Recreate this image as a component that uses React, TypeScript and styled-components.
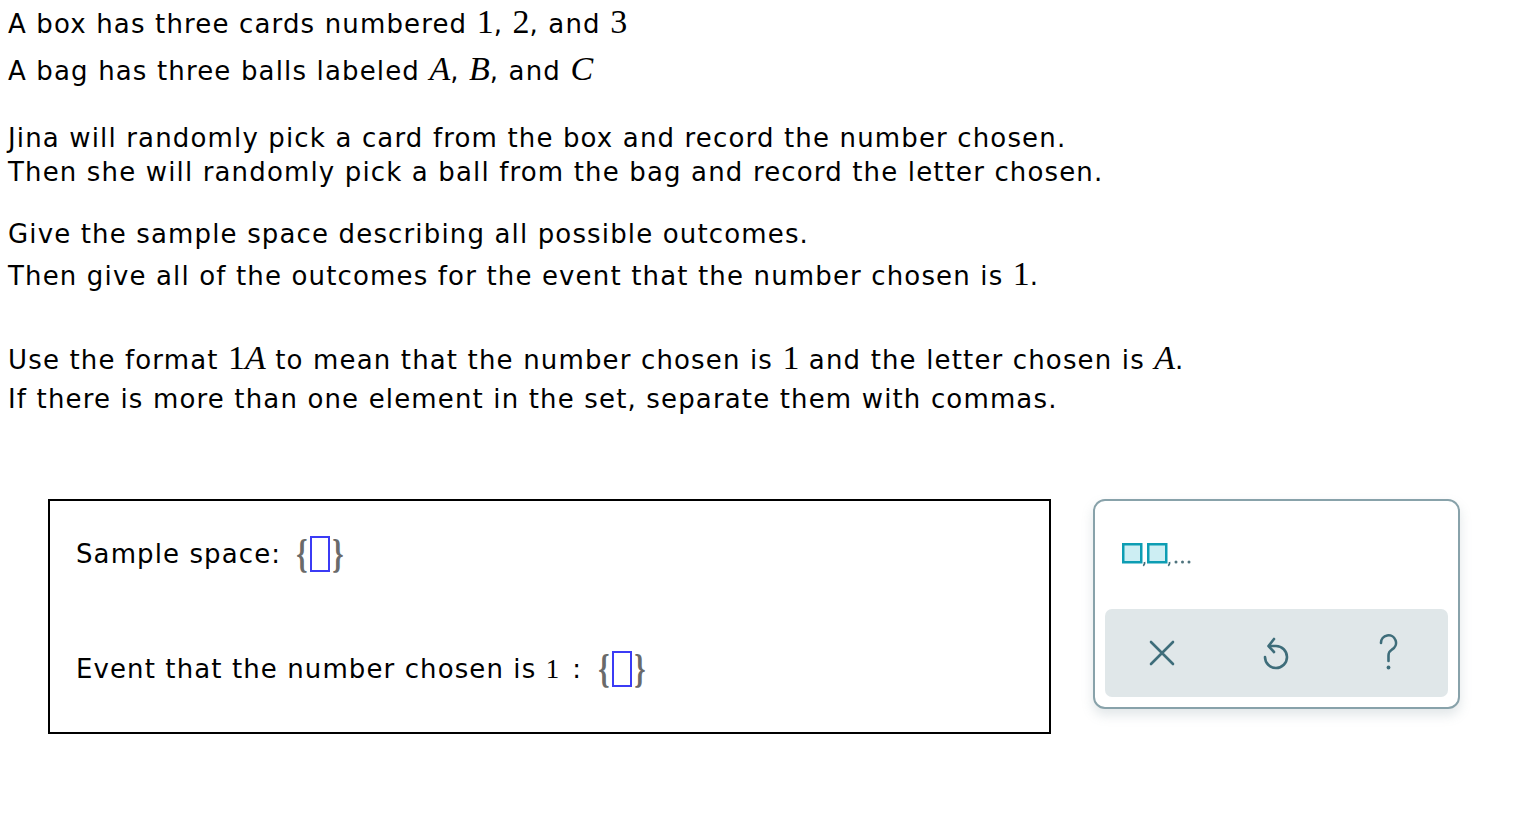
import styled, { createGlobalStyle } from "styled-components";

const GlobalStyle = createGlobalStyle`
  body {
    margin: 0;
    background: #ffffff;
    font-family: "DejaVu Sans", Verdana, sans-serif;
    color: #000000;
  }
`;

const Page = styled.div`
  padding: 0 8px;
  width: 1532px;
  box-sizing: border-box;
`;

const Para = styled.div<{ $top?: number }>`
  margin-top: ${(p) => p.$top ?? 0}px;
`;

const Line = styled.div<{ $h: number }>`
  height: ${(p) => p.$h}px;
  line-height: ${(p) => p.$h}px;
  font-size: 26px;
  letter-spacing: 1.15px;
  white-space: nowrap;
`;

const M = styled.span<{ $it?: boolean; $size?: number }>`
  font-family: "Liberation Serif", "Times New Roman", serif;
  font-size: ${(p) => p.$size ?? 34}px;
  font-style: ${(p) => (p.$it ? "italic" : "normal")};
  letter-spacing: 0;
`;

const Workspace = styled.div`
  display: flex;
  align-items: flex-start;
  gap: 42px;
  margin-top: 83px;
  margin-left: 40px;
`;

const AnswerBox = styled.div`
  width: 1003px;
  height: 235px;
  box-sizing: border-box;
  border: 2px solid #000000;
  padding: 27px 0 0 26px;
  display: flex;
  flex-direction: column;
  gap: 63px;
`;

const AnswerRow = styled.div`
  display: flex;
  align-items: center;
  height: 52px;
  font-size: 26px;
  letter-spacing: 1.1px;
  white-space: pre;
`;

const Colon = styled.span`
  margin: 0 10px 0 13px;
`;

const SetWrap = styled.span`
  display: inline-flex;
  align-items: center;
  gap: 2px;
  margin-left: 6px;
`;

const Brace = styled.span`
  font-family: "Liberation Serif", serif;
  font-size: 40px;
  font-weight: bold;
  color: #6a6a6a;
  line-height: 1;
  display: inline-block;
  transform: scaleX(0.72);
  margin: 0 -2px;
  letter-spacing: 0;
`;

const Slot = styled.span`
  display: inline-block;
  width: 20px;
  height: 36px;
  box-sizing: border-box;
  border: 2px solid #3b3bf5;
`;

const Panel = styled.div`
  width: 367px;
  height: 210px;
  box-sizing: border-box;
  border: 2px solid #88a2aa;
  border-radius: 12px;
  background: #ffffff;
  box-shadow: 0 6px 12px rgba(120, 140, 150, 0.22);
  padding: 42px 10px 10px 10px;
  display: flex;
  flex-direction: column;
  gap: 42px;
`;

const Palette = styled.div`
  display: flex;
  align-items: flex-end;
  padding-left: 17px;
  height: 24px;
`;

const ToolBar = styled.div`
  height: 88px;
  background: #e0e7e9;
  border-radius: 7px;
  display: grid;
  grid-template-columns: 1fr 1fr 1fr;
  align-items: center;
  justify-items: center;
`;

const ToolButton = styled.button`
  background: none;
  border: none;
  padding: 0;
  width: 40px;
  height: 40px;
  display: flex;
  align-items: center;
  justify-content: center;
  cursor: pointer;
`;

const ICON = "#3e6d7a";

function PaletteIcon() {
  return (
    <svg width="76" height="24" viewBox="0 0 76 24">
      <rect x="1.25" y="1.25" width="18" height="18" fill="#cdeef3" stroke="#0d9db3" strokeWidth="2.5" />
      <path d="M22.5 19 q0.6 2.2 -1.2 3.8" stroke="#3e6d7a" strokeWidth="1.8" fill="none" />
      <rect x="26.25" y="1.25" width="18" height="18" fill="#cdeef3" stroke="#0d9db3" strokeWidth="2.5" />
      <path d="M47.5 19 q0.6 2.2 -1.2 3.8" stroke="#3e6d7a" strokeWidth="1.8" fill="none" />
      <circle cx="54" cy="19" r="1.5" fill="#4f737d" />
      <circle cx="60.5" cy="19" r="1.5" fill="#4f737d" />
      <circle cx="67" cy="19" r="1.5" fill="#4f737d" />
    </svg>
  );
}

function ClearIcon() {
  return (
    <svg width="26" height="26" viewBox="0 0 26 26">
      <path d="M2 2 L24 24 M24 2 L2 24" stroke={ICON} strokeWidth="2.6" strokeLinecap="round" />
    </svg>
  );
}

function UndoIcon() {
  return (
    <svg width="30" height="36" viewBox="0 0 30 36">
      <path
        d="M4 22 A11 11 0 1 0 15 11 L8 11"
        stroke={ICON}
        strokeWidth="2.6"
        fill="none"
        strokeLinecap="round"
      />
      <path d="M13 4 L7.5 11 L13 17" stroke={ICON} strokeWidth="2.6" fill="none" strokeLinecap="round" strokeLinejoin="round" />
    </svg>
  );
}

function HelpIcon() {
  return (
    <svg width="24" height="38" viewBox="0 0 24 38">
      <path
        d="M2 9 A7.5 7.5 0 1 1 13 15.5 C10.5 17 9.5 18.5 9.5 21.5 L9.5 27"
        stroke={ICON}
        strokeWidth="2.6"
        fill="none"
        strokeLinecap="round"
      />
      <circle cx="9.5" cy="33.5" r="1.9" fill={ICON} />
    </svg>
  );
}

function SetInput() {
  return (
    <SetWrap>
      <Brace>{"{"}</Brace>
      <Slot />
      <Brace>{"}"}</Brace>
    </SetWrap>
  );
}

export default function App() {
  return (
    <Page>
      <GlobalStyle />
      <Para>
        <Line $h={44}>
          A box has three cards numbered <M>1</M>, <M>2</M>, and <M>3</M>
        </Line>
        <Line $h={50}>
          A bag has three balls labeled <M $it>A</M>, <M $it>B</M>, and <M $it>C</M>
        </Line>
      </Para>
      <Para $top={27}>
        <Line $h={34}>Jina will randomly pick a card from the box and record the number chosen.</Line>
        <Line $h={34}>Then she will randomly pick a ball from the bag and record the letter chosen.</Line>
      </Para>
      <Para $top={28}>
        <Line $h={34}>Give the sample space describing all possible outcomes.</Line>
        <Line $h={46}>
          Then give all of the outcomes for the event that the number chosen is <M>1</M>.
        </Line>
      </Para>
      <Para $top={37}>
        <Line $h={48}>
          Use the format <M>1</M>
          <M $it>A</M> to mean that the number chosen is <M>1</M> and the letter chosen is <M $it>A</M>.
        </Line>
        <Line $h={34}>If there is more than one element in the set, separate them with commas.</Line>
      </Para>
      <Workspace>
        <AnswerBox>
          <AnswerRow>
            {"Sample space: "}
            <SetInput />
          </AnswerRow>
          <AnswerRow>
            {"Event that the number chosen is "}
            <M $size={27}>1</M>
            <Colon>:</Colon>
            <SetInput />
          </AnswerRow>
        </AnswerBox>
        <Panel>
          <Palette>
            <PaletteIcon />
          </Palette>
          <ToolBar>
            <ToolButton aria-label="Clear">
              <ClearIcon />
            </ToolButton>
            <ToolButton aria-label="Undo">
              <UndoIcon />
            </ToolButton>
            <ToolButton aria-label="Help">
              <HelpIcon />
            </ToolButton>
          </ToolBar>
        </Panel>
      </Workspace>
    </Page>
  );
}
